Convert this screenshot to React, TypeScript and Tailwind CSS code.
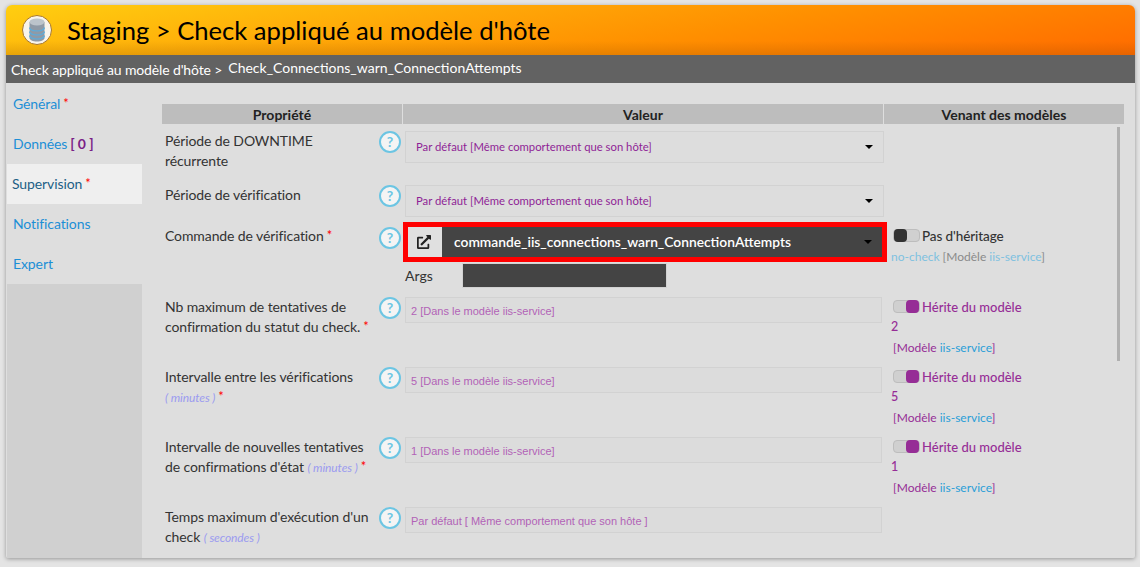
import React from "react";
import { FaExternalLinkAlt } from "react-icons/fa";

function Star() {
  return <span className="text-[#ff0000] text-[13px] leading-none relative -top-[1px] ml-[3px]">*</span>;
}
function Unit({ t }: { t: string }) {
  return <i className="text-[#9b9bf0] text-[12px] tracking-[-0.1px]">( {t} )</i>;
}
function Help() {
  return (
    <div className="w-[22px] h-[22px] rounded-full border-2 border-[#6cc5e3] bg-[#f4f4f4] flex items-center justify-center text-[#6cc5e3] text-[14px] font-bold shrink-0 leading-none">
      ?
    </div>
  );
}
function Caret() {
  return <div className="w-0 h-0 border-x-[4px] border-x-transparent border-t-[4px] border-t-black" />;
}
function SelectBox() {
  return (
    <div className="h-[32px] w-[479px] border border-[#d2d2d2] bg-[#dddddd] flex items-center justify-between pl-[10px] pr-[10px]">
      <span className="text-[#8f1f96] text-[11.3px]">Par défaut [Même comportement que son hôte]</span>
      <Caret />
    </div>
  );
}
function InputBox({ t }: { t: string }) {
  return (
    <div className="h-[26px] w-[477px] border border-[#d2d2d2] bg-[#dcdcdc] flex items-center pl-[5px] pt-[2px] text-[#b263b7] text-[11px] [font-family:'Liberation_Sans',sans-serif]">
      {t}
    </div>
  );
}
function Toggle({ on }: { on?: boolean }) {
  return (
    <div className="w-[27px] h-[13px] rounded-[4px] bg-[#d0d0d0] border border-[#bdbdbd] relative shrink-0 -mt-[2px]">
      <div className={"absolute -top-[1px] w-[13px] h-[13px] rounded-[4px] " + (on ? "right-0 bg-[#962d96]" : "left-0 bg-[#333333]")} />
    </div>
  );
}
function Inherit({ v }: { v: string }) {
  return (
    <div className="pl-[6px] text-[12px] text-[#962d96] pt-[7px]">
      <div className="flex items-center gap-[2px] pl-[2px] h-[20px]">
        <Toggle on />
        <span className="text-[13px] font-medium pt-[1px]">Hérite du modèle</span>
      </div>
      <div className="h-[20px] leading-[20px] text-[12.5px] font-medium">{v}</div>
      <div className="h-[20px] leading-[20px] pl-[2px] mt-[1px]">
        [Modèle <span className="text-[#2b9fd8]">iis-service</span>]
      </div>
    </div>
  );
}
function Row({
  h,
  label,
  children,
  right,
}: {
  h: number;
  label: React.ReactNode;
  children: React.ReactNode;
  right?: React.ReactNode;
}) {
  return (
    <div className="flex" style={{ height: h }}>
      <div className="w-[217px] pl-[3px] text-[14px] tracking-[-0.1px] leading-[20px] text-[#333333] pt-[7px] shrink-0">{label}</div>
      <div className="w-[26px] pt-[7px] shrink-0">
        <Help />
      </div>
      <div className="w-[480px] shrink-0 pt-[7px]">{children}</div>
      <div className="flex-1 min-w-0">{right}</div>
    </div>
  );
}

export default function App() {
  return (
    <div className="w-[1140px] h-[567px] bg-[#e4e4e4] pt-[5px] pl-[6px] overflow-hidden [font-family:Lato,sans-serif]">
      <div className="w-[1129px] h-[553px] rounded-t-[6px] rounded-b-[2px] overflow-hidden shadow-[0_1px_4px_rgba(0,0,0,0.35)] bg-[#dedede] flex flex-col">
        <div className="h-[50px] shrink-0 bg-[linear-gradient(170deg,#ffcf10_0%,#ffa808_35%,#ff9000_60%,#ff6a00_100%)] relative flex items-center pl-[16px]">
          <div className="absolute inset-x-0 bottom-0 h-[14px] bg-gradient-to-b from-transparent to-[rgba(120,70,0,0.18)]" />
          <div className="relative w-[30px] h-[30px] rounded-full bg-[#f8f4ec] border border-[#a8772a] flex items-center justify-center">
            <svg viewBox="0 0 16 24" className="w-[16px] h-[24px]">
              <path d="M0.500 4v16c0 1.900 3.300 3.500 7.500 3.500s7.500-1.600 7.500-3.500V4z" fill="#8f9aa6" />
              <ellipse cx="8" cy="4" rx="7.500" ry="3.400" fill="#bcc4cb" />
              <path d="M0.500 9.500c0 1.900 3.300 3.500 7.500 3.500s7.500-1.600 7.500-3.500M0.500 13.500c0 1.900 3.300 3.500 7.500 3.500s7.500-1.600 7.500-3.500M0.500 17.500c0 1.900 3.300 3.500 7.500 3.500s7.500-1.600 7.500-3.500" fill="none" stroke="#58aee0" strokeWidth="1.200" />
            </svg>
          </div>
          <div className="relative ml-[15px] text-[25.6px] text-black leading-none pt-[1px]">
            Staging &gt; Check appliqué au modèle d'hôte
          </div>
        </div>
        <div className="h-[28px] shrink-0 bg-[#626262] text-white flex items-center pl-[5px] text-[14px]">
          <span className="pt-[1px] tracking-[-0.13px]">Check appliqué au modèle d'hôte &gt;</span>
          <span className="ml-[6px] -mt-[3px]">Check_Connections_warn_ConnectionAttempts</span>
        </div>
        <div className="flex-1 flex min-h-0">
          <div className="w-[135px] ml-[1px] shrink-0 bg-[#d0d0d0] text-[14px] tracking-[-0.1px] self-stretch">
            <div className="bg-[#dedede]">
              <div className="h-[41px] pl-[6px] pt-[11px] text-[#1c8fd6] leading-[20px]">
                Général<Star />
              </div>
              <div className="h-[40px] pl-[6px] pt-[10px] text-[#1c8fd6] leading-[20px] flex gap-[3px]">
                <span>Données</span> <b className="text-[#7a1f87]">[ 0 ]</b>
              </div>
              <div className="h-[40px] pl-[5px] pt-[10px] text-[#1d5f86] leading-[20px] bg-[#efefef]">
                Supervision<Star />
              </div>
              <div className="h-[40px] pl-[6px] pt-[10px] text-[#1c8fd6] leading-[20px]">Notifications</div>
              <div className="h-[40px] pl-[6px] pt-[10px] text-[#1c8fd6] leading-[20px]">Expert</div>
            </div>
          </div>
          <div className="flex-1 min-w-0 pl-[20px] pr-[11px] pt-[21px] relative">
            <div className="flex h-[20px] text-[14px] font-bold text-[#222222] gap-[1px]">
              <div className="w-[240px] bg-[#bdbdbd] flex items-center justify-center">Propriété</div>
              <div className="w-[480px] bg-[#bdbdbd] flex items-center justify-center">Valeur</div>
              <div className="flex-1 bg-[#bdbdbd] flex items-center justify-center">Venant des modèles</div>
            </div>
            <div className="absolute right-[15px] top-[44px] w-[3px] h-[234px] bg-[#b0b0b0]" />
            <Row h={54} label={<>Période de DOWNTIME<br />récurrente</>}>
              <SelectBox />
            </Row>
            <Row h={42} label="Période de vérification">
              <SelectBox />
            </Row>
            <Row
              h={70}
              label={<div className="-mt-[1px]">Commande de vérification<Star /></div>}
              right={
                <div className="pl-[6px] text-[12px] pt-[6px]">
                  <div className="flex items-center gap-[2px] pl-[2px] h-[20px]">
                    <Toggle />
                    <span className="text-[13.5px] font-medium tracking-[-0.1px] text-[#333333]">Pas d'héritage</span>
                  </div>
                  <div className="h-[20px] leading-[20px] mt-[1px] text-[#8a8a8a] whitespace-nowrap">
                    <span className="text-[#7fc1e0]">no-check</span> [Modèle <span className="text-[#7fc1e0]">iis-service</span>]
                  </div>
                </div>
              }
            >
              <div className="-mt-[5px] -ml-[2px] w-[484px] h-[40px] border-[5px] border-[#ff0000] flex bg-[#444444]">
                <div className="w-[34px] bg-[#e0e0e0] flex items-center justify-center shrink-0 pr-[3px]">
                  <FaExternalLinkAlt size={14} className="text-[#222222]" />
                </div>
                <div className="flex-1 flex items-center justify-between pl-[12px] pr-[10px] text-white text-[13.8px] font-semibold">
                  <span>commande_iis_connections_warn_ConnectionAttempts</span>
                  <Caret />
                </div>
              </div>
              <div className="flex items-center mt-[1px] h-[25px]">
                <span className="w-[57px] text-[14px] text-[#333333]">Args</span>
                <div className="w-[205px] h-[25px] bg-[#444444] border border-[#d2d2d2]" />
              </div>
            </Row>
            <Row
              h={70}
              label={<>Nb maximum de tentatives de<br />confirmation du statut du check.<Star /></>}
              right={<Inherit v="2" />}
            >
              <InputBox t="2 [Dans le modèle iis-service]" />
            </Row>
            <Row
              h={70}
              label={<>Intervalle entre les vérifications<br /><Unit t="minutes" /><Star /></>}
              right={<Inherit v="5" />}
            >
              <InputBox t="5 [Dans le modèle iis-service]" />
            </Row>
            <Row
              h={70}
              label={<>Intervalle de nouvelles tentatives<br />de confirmations d'état <Unit t="minutes" /><Star /></>}
              right={<Inherit v="1" />}
            >
              <InputBox t="1 [Dans le modèle iis-service]" />
            </Row>
            <Row h={50} label={<>Temps maximum d'exécution d'un<br />check <Unit t="secondes" /></>}>
              <InputBox t="Par défaut [ Même comportement que son hôte ]" />
            </Row>
          </div>
        </div>
      </div>
    </div>
  );
}
